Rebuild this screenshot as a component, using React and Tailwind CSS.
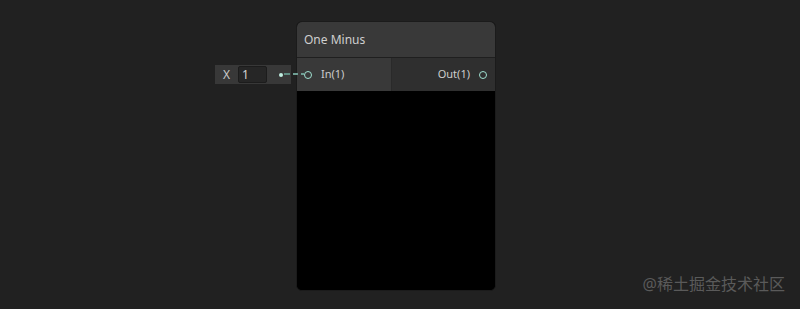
import React from 'react';

const Port = ({ className = '' }) => (
  <span className={`block w-[8px] h-[8px] rounded-full border-[1.5px] border-[#9fe0d0] ${className}`} />
);

const App = () => {
  return (
    <div
      className="w-[800px] h-[309px] bg-[#212121] flex relative overflow-hidden"
      style={{ fontFamily: '"Noto Sans", "Noto Sans CJK SC", sans-serif' }}
    >
      {/* inline value field */}
      <div className="mt-[65px] ml-[215px] h-[19px] w-[76px] bg-[#383838] flex items-center text-[12px] text-[#c8c8c8]">
        <span className="ml-[8px] w-[15px]">X</span>
        <span className="h-[17px] w-[29px] bg-[#262626] rounded-[2px] border border-[#1c1c1c] pl-[3px] leading-[15px] text-[#d4d4d4]">1</span>
        <span className="ml-[12px] w-[4px] h-[4px] rounded-full bg-[#bfeee0]" />
      </div>
      <div className="w-[5px]" />

      {/* node */}
      <div className="mt-[21px] w-[200px] h-[270px] rounded-[6px] bg-[#000] flex flex-col overflow-hidden border border-[#1b1b1b]">
        <div className="h-[36px] bg-[#393939] flex items-center px-[7px] text-[12px] text-[#cfcfcf] border-b border-[#1f1f1f]">
          One Minus
        </div>
        <div className="h-[33px] flex text-[11px] text-[#cdcdcd]">
          <div className="w-[95px] bg-[#393939] flex items-center pl-[7px] gap-[9px] border-r border-[#2a2a2a]">
            <Port />
            <span>In(1)</span>
          </div>
          <div className="flex-1 bg-[#2f2f2f] flex items-center justify-end pr-[8px] gap-[9px]">
            <span>Out(1)</span>
            <Port />
          </div>
        </div>
        <div className="flex-1 bg-black" />
      </div>

      {/* wire */}
      <div className="absolute left-[284px] top-[73px] w-[20px] h-[2px] flex gap-[3px]">
        <span className="w-[6px] h-[2px] bg-[#5f8d82]" />
        <span className="w-[5px] h-[2px] bg-[#6f9f94]" />
        <span className="w-[3px] h-[2px] bg-[#6f9f94]" />
      </div>

      <div className="absolute right-[15px] bottom-[13px] text-[16px] text-[#5a5a5a]">
        @稀土掘金技术社区
      </div>
    </div>
  );
};

export default App;
